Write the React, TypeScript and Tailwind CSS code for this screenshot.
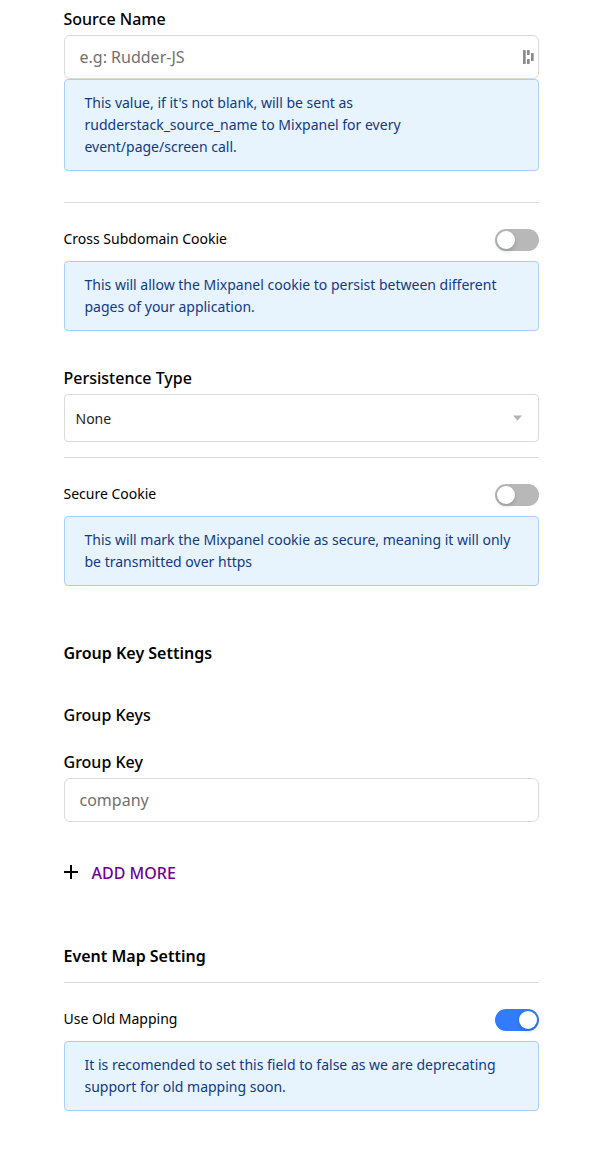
import React from 'react';

function Title({ children, className = '' }: { children: React.ReactNode; className?: string }) {
  return <div className={`-ml-[0.5px] text-base leading-6 text-black ${className}`}>{children}</div>;
}

function Note({ children, className = '' }: { children: React.ReactNode; className?: string }) {
  return (
    <div className={`rounded-[4px] border border-[#abceff] bg-[#e7f4fe] py-3 pr-5 pl-[19.5px] text-sm leading-[22px] text-[#123a85] ${className}`}>
      {children}
    </div>
  );
}

function Toggle({ label, on = false }: { label: string; on?: boolean }) {
  return (
    <div className="-ml-[0.5px] flex h-[22px] items-start justify-between">
      <span className="text-sm leading-5 text-black">{label}</span>
      <button
        role="switch"
        aria-checked={on}
        className={`flex h-[22px] w-11 items-center rounded-full p-0.5 ${on ? 'justify-end bg-[#327bfb]' : 'justify-start bg-[#b8b8b8]'}`}
      >
        <span className="size-[18px] rounded-full bg-white shadow-[0_2px_4px_rgba(0,35,11,0.2)]" />
      </button>
    </div>
  );
}

function Field({ placeholder, icon }: { placeholder: string; icon?: React.ReactNode }) {
  return (
    <div className="flex h-11 items-center rounded-[6px] border border-[#d9d9d9] bg-white pr-1 pl-[14.5px]">
      <input className="min-w-0 flex-1 text-base leading-6 outline-none placeholder:text-[#707070]" placeholder={placeholder} />
      {icon}
    </div>
  );
}

export default function App() {
  return (
    <div className="h-[1150px] w-[592px] overflow-hidden bg-white pt-[7px] pr-[53px] pl-16 font-['Noto_Sans',sans-serif]">
      <Title className="mb-1 font-medium">Source Name</Title>
      <Field
        placeholder="e.g: Rudder-JS"
        icon={
          <svg width="11" height="16" viewBox="0 0 11 16" fill="#8d8b88">
            <rect x="0" y="1" width="2.700" height="14" rx=".6" />
            <rect x="4" y="1" width="2.700" height="5" rx=".6" />
            <rect x="4" y="10" width="2.700" height="5" rx=".6" />
            <rect x="8" y="4" width="2.700" height="8" rx=".6" />
          </svg>
        }
      />
      <Note>
        This value, if it's not blank, will be sent as<br />rudderstack_source_name to Mixpanel for every<br />event/page/screen call.
      </Note>
      <hr className="mt-[31px] mb-[26px] border-[#d9d9d9]" />
      <Toggle label="Cross Subdomain Cookie" />
      <Note className="mt-[10px]">
        This will allow the Mixpanel cookie to persist between different<br />pages of your application.
      </Note>
      <Title className="mt-[35px] mb-1 font-medium">Persistence Type</Title>
      <div className="flex h-12 items-center justify-between rounded-[4px] border border-[#d9d9d9] pr-4 pl-[10.5px] text-sm text-[#222]">
        <span className="pt-0.5">None</span>
        <svg width="9" height="6" viewBox="0 0 9 6" fill="#b3b3b3"><path d="M0 .5h9L4.500 5.500z" /></svg>
      </div>
      <hr className="mt-[15px] mb-[26px] border-[#d9d9d9]" />
      <Toggle label="Secure Cookie" />
      <Note className="mt-[10px]">
        This will mark the Mixpanel cookie as secure, meaning it will only<br />be transmitted over https
      </Note>
      <Title className="mt-[55px] font-semibold">Group Key Settings</Title>
      <Title className="mt-[38px] font-medium">Group Keys</Title>
      <Title className="mt-[23px] mb-1 font-medium">Group Key</Title>
      <Field placeholder="company" />
      <button className="mt-[39px] flex h-6 items-center gap-[13.500px] text-base leading-6 font-medium text-[#6f0099]">
        <svg className="mb-0.5" width="14" height="14" viewBox="0 0 14 14" stroke="#000" strokeWidth="2"><path d="M7 0v14M0 7h14" /></svg>
        ADD MORE
      </button>
      <Title className="mt-[59px] font-semibold">Event Map Setting</Title>
      <hr className="mt-[14px] mb-[26px] border-[#d9d9d9]" />
      <Toggle label="Use Old Mapping" on />
      <Note className="mt-[10px]">
        It is recomended to set this field to false as we are deprecating<br />support for old mapping soon.
      </Note>
    </div>
  );
}
